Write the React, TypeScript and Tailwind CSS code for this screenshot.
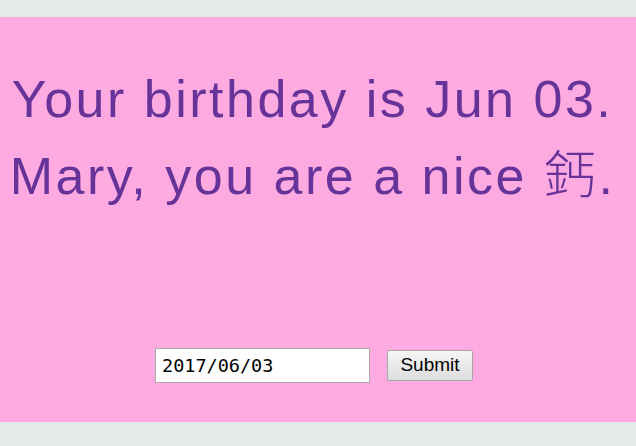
export default function App() {
  return (
    <div className="flex h-[446px] w-[636px] flex-col bg-[#e4e9e9]">
      <div className="h-[17px] shrink-0 border-b border-[#dfe4e4]" />
      <main className="flex h-[405px] flex-col items-center bg-[#ffaae0] pt-[44px]">
        <h1 className="pr-[11px] text-center font-['Liberation_Sans','Noto_Sans_CJK_SC',sans-serif] text-[52px] leading-[77px] tracking-[2.5px] text-[#663399]">
          Your birthday is Jun 03.
          <br />
          Mary, you are a nice <span className="font-light">鈣</span>.
        </h1>
        <form className="mt-auto mb-[39px] flex items-center gap-[17px] pr-[8px]" onSubmit={(e) => e.preventDefault()}>
          <input
            type="text"
            defaultValue="2017/06/03"
            className="h-[35px] w-[215px] border border-[#a9a9a9] bg-white px-[6px] font-['DejaVu_Sans_Mono',monospace] text-[18.5px] text-black"
          />
          <button
            type="submit"
            className="h-[31px] w-[86px] rounded-[2px] border border-[#a6a6a6] bg-gradient-to-b from-[#f6f6f6] to-[#dddddd] font-['Liberation_Sans',sans-serif] text-[19px] text-black"
          >
            Submit
          </button>
        </form>
      </main>
    </div>
  )
}
